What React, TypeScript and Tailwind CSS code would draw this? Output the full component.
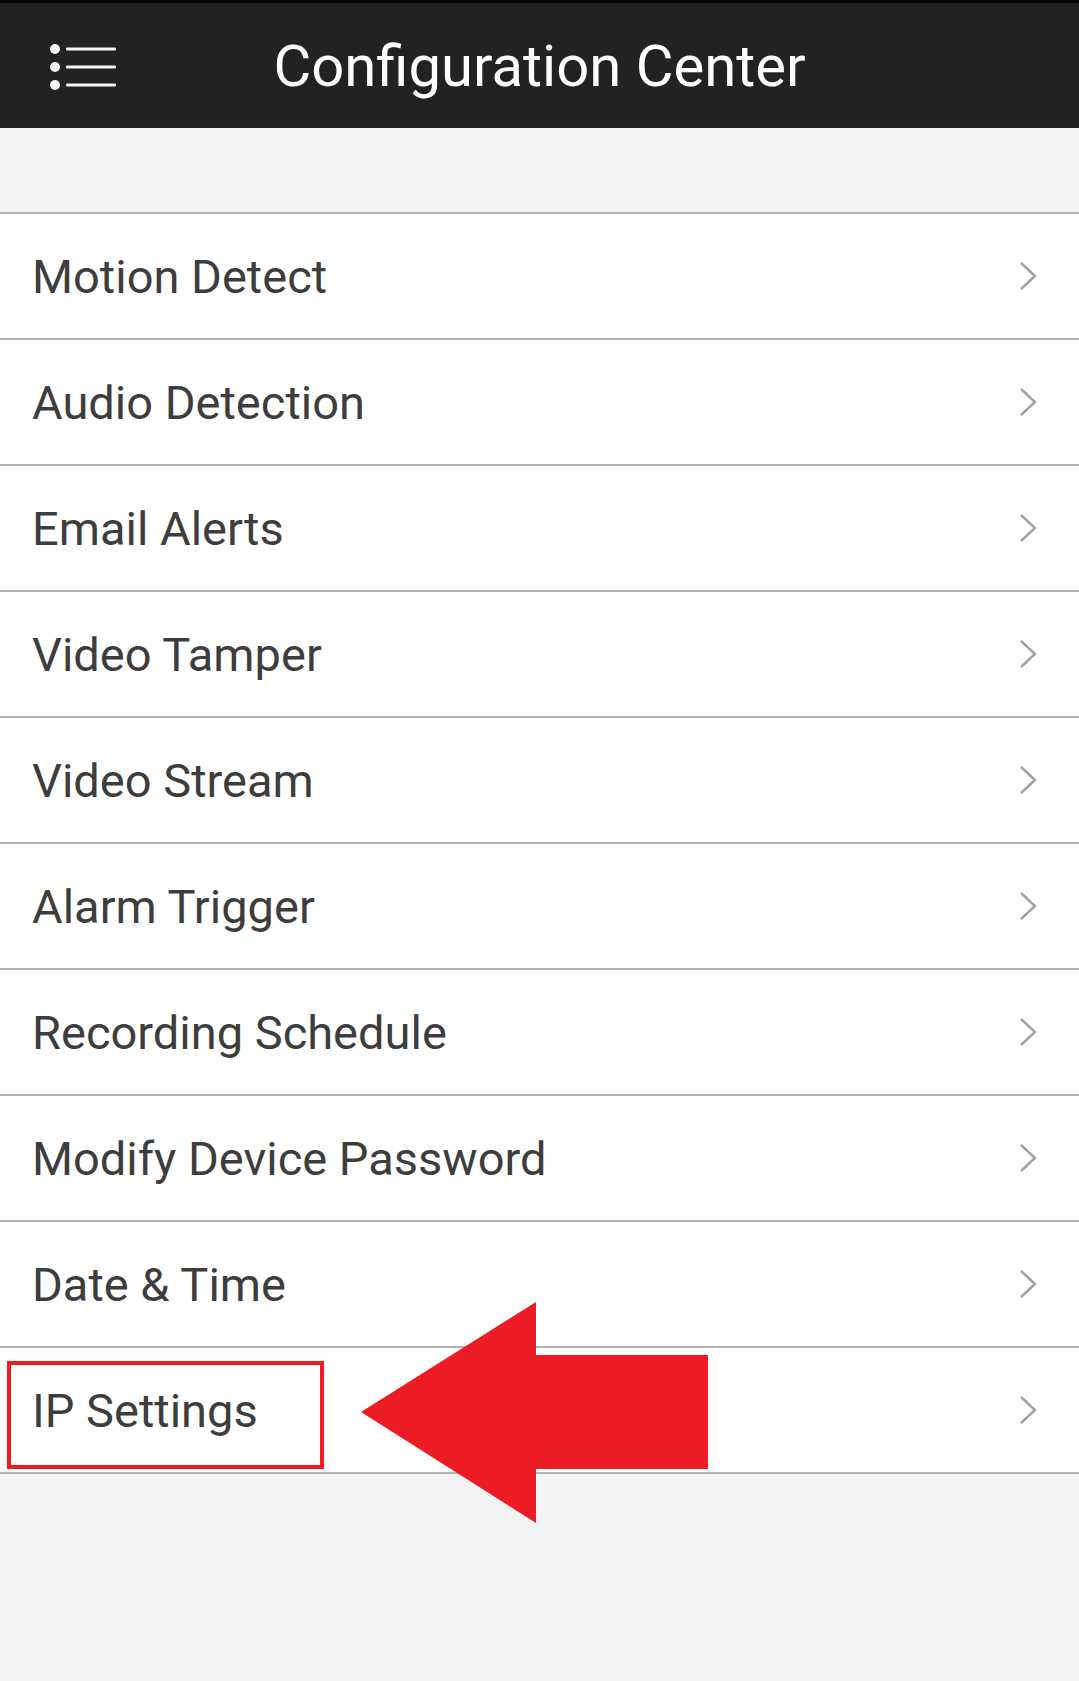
import React from 'react';

const items = [
  'Motion Detect',
  'Audio Detection',
  'Email Alerts',
  'Video Tamper',
  'Video Stream',
  'Alarm Trigger',
  'Recording Schedule',
  'Modify Device Password',
  'Date & Time',
  'IP Settings',
];

const MenuIcon: React.FC = () => (
  <svg width="72" height="50" viewBox="0 0 72 50" className="block">
    <circle cx="9" cy="7" r="5" fill="#f5f5f5" />
    <circle cx="9" cy="25" r="5" fill="#f5f5f5" />
    <circle cx="9" cy="43" r="5" fill="#f5f5f5" />
    <rect x="20" y="5.5" width="50" height="3" rx="1" fill="#f5f5f5" />
    <rect x="20" y="23.5" width="50" height="3" rx="1" fill="#f5f5f5" />
    <rect x="20" y="41.5" width="50" height="3" rx="1" fill="#f5f5f5" />
  </svg>
);

const Chevron: React.FC = () => (
  <svg width="20" height="30" viewBox="0 0 20 30" className="block">
    <path d="M3 2 L17 15 L3 28" fill="none" stroke="#a0a0a0" strokeWidth="2.4" />
  </svg>
);

const Arrow: React.FC = () => (
  <svg
    width="348"
    height="224"
    viewBox="0 0 348 224"
    className="absolute left-[361px] top-[-47px] pointer-events-none"
  >
    <polygon points="0,111 175,1 175,54 347,54 347,168 175,168 175,222" fill="#ed1c24" />
  </svg>
);

const Row: React.FC<{ label: string; highlight?: boolean }> = ({ label, highlight }) => (
  <div className="relative flex items-center justify-between h-[126px] bg-white border-b-2 border-[#b3b3b3] pl-[32px] pr-[41px]">
    <span className="text-[47px] text-[#3d3d3d] leading-none">{label}</span>
    <Chevron />
    {highlight && (
      <>
        <div className="absolute left-[7px] top-[13px] w-[317px] h-[108px] border-4 border-[#ed1c24]" />
        <Arrow />
      </>
    )}
  </div>
);

export default function App() {
  return (
    <div
      className="min-h-[1681px] w-full bg-[#f3f3f3] overflow-hidden"
      style={{ fontFamily: 'Roboto, "Noto Sans", sans-serif' }}
    >
      <header className="h-[128px] bg-[#222222] border-t-[3px] border-black grid grid-cols-[1fr_auto_1fr] items-center">
        <div className="pl-[46px] pt-[2px]">
          <MenuIcon />
        </div>
        <h1 className="text-[58px] text-white font-normal leading-none">Configuration Center</h1>
        <div />
      </header>
      <div className="h-[84px]" />
      <div className="border-t-2 border-[#b3b3b3]">
        {items.map((label) => (
          <Row key={label} label={label} highlight={label === 'IP Settings'} />
        ))}
      </div>
    </div>
  );
}
